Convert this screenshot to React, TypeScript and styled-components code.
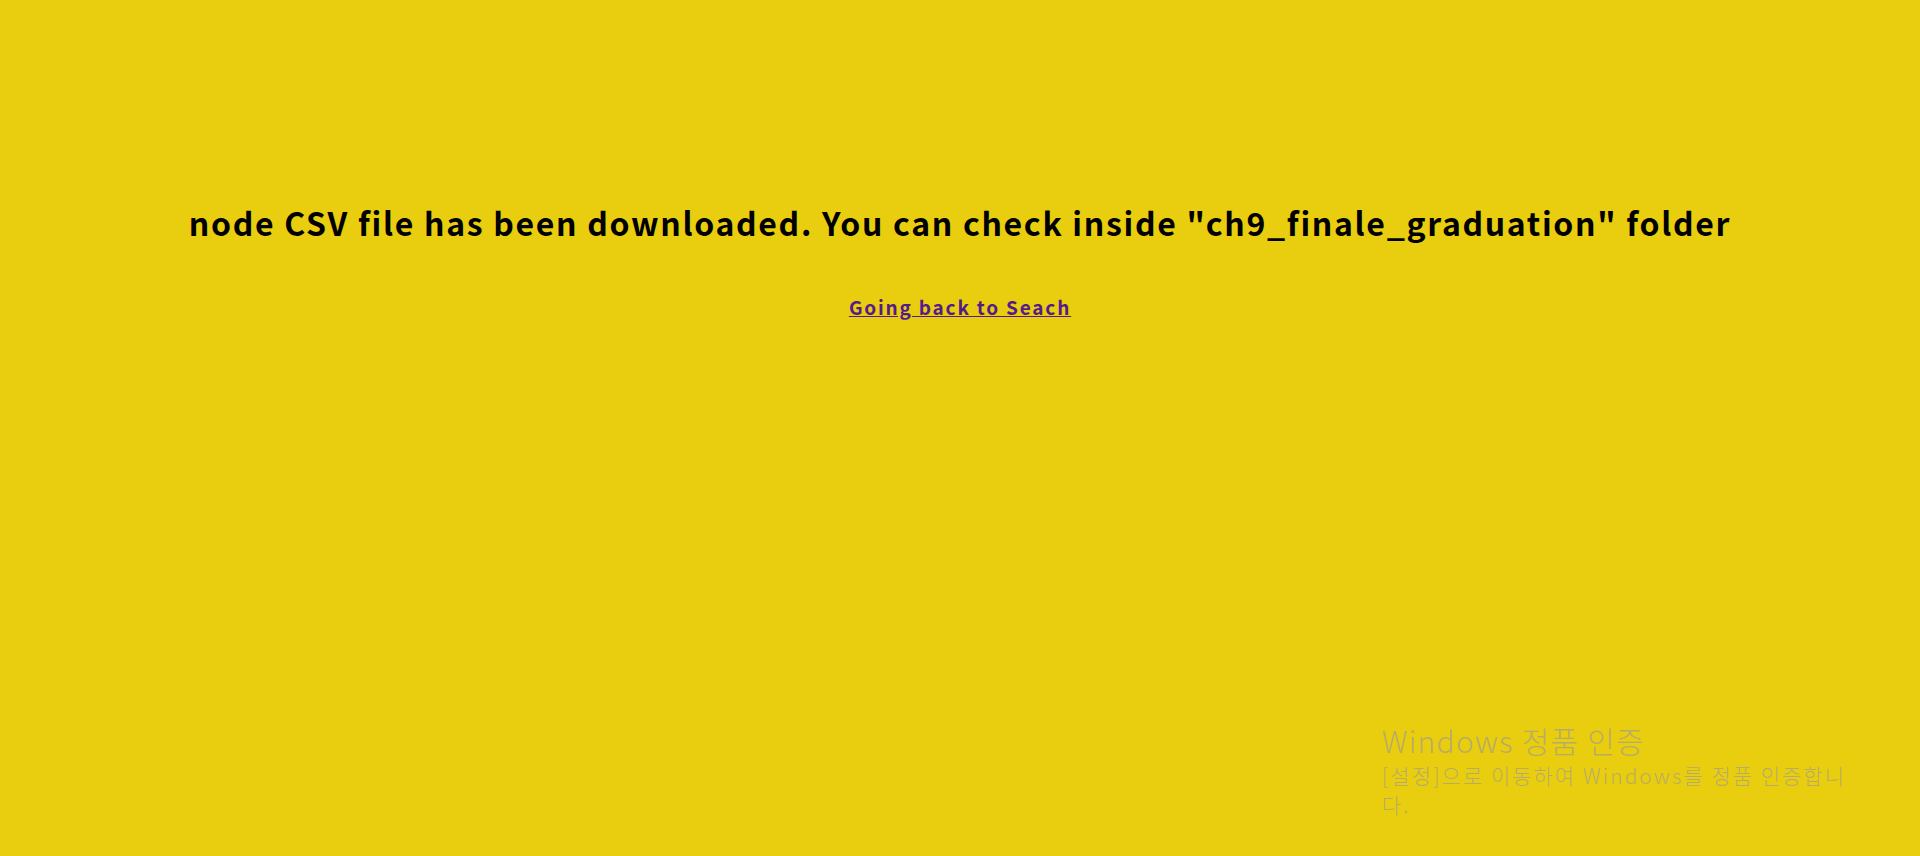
import React from "react";
import styled, { createGlobalStyle } from "styled-components";

const GlobalStyle = createGlobalStyle`
  html, body {
    background: #e9cd0f;
  }
  body {
    margin: 8px;
    min-height: 840px;
    font-family: "Noto Sans CJK KR", "Noto Sans", sans-serif;
  }
`;

const Main = styled.main`
  display: flex;
  flex-direction: column;
  align-items: center;
  padding-top: 194px;
`;

const Title = styled.h1`
  margin: 0;
  font-size: 32px;
  font-weight: 700;
  line-height: 40px;
  letter-spacing: 1.68px;
  color: #000;
  white-space: nowrap;
`;

const LinkLine = styled.h3`
  margin: 52px 0 0;
  font-size: 19px;
  font-weight: 700;
  line-height: 26px;
  letter-spacing: 1.8px;
`;

const BackLink = styled.a`
  color: #551a8b;
  text-decoration: underline;
`;

const Watermark = styled.div`
  position: fixed;
  left: 1382px;
  top: 720px;
  width: 472px;
  color: rgba(150, 150, 160, 0.62);
  font-family: "Noto Sans CJK KR", sans-serif;
  pointer-events: none;
`;

const WmTitle = styled.div`
  font-size: 30px;
  font-weight: 300;
  line-height: 41px;
  letter-spacing: 1.2px;
`;

const WmText = styled.div`
  font-size: 21px;
  font-weight: 300;
  line-height: 29px;
  letter-spacing: 2px;
`;

export default function App() {
  return (
    <>
      <GlobalStyle />
      <Main>
        <Title>
          node CSV file has been downloaded. You can check inside "ch9_finale_graduation" folder
        </Title>
        <LinkLine>
          <BackLink href="#">Going back to Seach</BackLink>
        </LinkLine>
      </Main>
      <Watermark>
        <WmTitle>Windows 정품 인증</WmTitle>
        <WmText>[설정]으로 이동하여 Windows를 정품 인증합니다.</WmText>
      </Watermark>
    </>
  );
}
